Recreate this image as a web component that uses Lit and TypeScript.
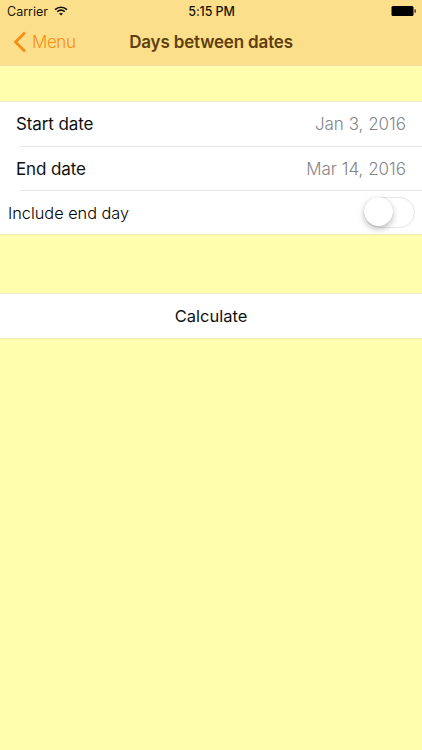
import { LitElement, html, css } from "lit";
import { customElement } from "lit/decorators.js";

@customElement("app-root")
export class AppRoot extends LitElement {
  static styles = css`
    :host { display: block; width: 422px; height: 750px; background: #ffffad; overflow: hidden;
      font-family: Inter, "Liberation Sans", sans-serif; color: #111; }
    * { box-sizing: border-box; }
    .top { height: 66px; background: #fcdf8a; border-bottom: 1px solid #eed9a0; display: flex; flex-direction: column; }
    .status { height: 21px; display: grid; grid-template-columns: 1fr auto 1fr; align-items: center; padding: 1px 6px 0 7px; font-size: 12.5px; color: #1a1408; }
    .status .l { display: flex; align-items: center; gap: 6px; }
    .status .t { font-weight: 500; letter-spacing: -0.1px; }
    .status .r { display: flex; justify-content: flex-end; }
    .nav { flex: 1; display: grid; grid-template-columns: 1fr auto 1fr; align-items: center; padding-bottom: 2px; }
    .back { display: flex; align-items: center; gap: 5px; padding-left: 13px; color: #f68f14; font-size: 17px; letter-spacing: -0.4px; font-weight: 300; }
    .title { font-size: 17px; font-weight: 600; color: #5f3f10; letter-spacing: -0.17px; }
    .spacer1 { height: 35px; }
    .group { background: #fff; border-top: 1px solid #f0efd0; border-bottom: 1px solid #f0efc4; }
    .row { height: 44px; display: flex; align-items: center; justify-content: space-between; padding: 0 16px; font-size: 17px; letter-spacing: -0.1px; position: relative; }
    .row + .row::before { content: ""; position: absolute; left: 20px; right: 0; top: -0.5px; height: 1px; background: #e8e8e8; }
    .row + .row > span { padding-top: 2px; }
    .val { color: #858589; letter-spacing: 0; font-weight: 300; }
    .tight { padding: 0 7px 0 8px; font-size: 16.3px; letter-spacing: 0; font-weight: 300; color: #000; }
    .switch { width: 51px; height: 31px; border-radius: 16px; border: 1.5px solid #e5e5e5; background: #fff; position: relative; }
    .knob { position: absolute; left: -1px; top: -0.5px; width: 29px; height: 29px; border-radius: 50%; background: #fff;
      box-shadow: 0 3px 6px rgba(0,0,0,.25), 0 0 1px rgba(0,0,0,.2); }
    .spacer2 { height: 58px; }
    .calc { height: 44px; display: flex; align-items: center; justify-content: center; font-size: 16.5px; }
  `;
  render() {
    return html`
      <div class="top">
        <div class="status">
          <div class="l"><span>Carrier</span>
            <svg width="14" height="10" viewBox="0 0 14 10" fill="none" stroke="#111" stroke-width="1.6">
              <path d="M1 3.6C4.4.5 9.6.5 13 3.6"/><path d="M3.2 5.7C5.4 3.8 8.6 3.8 10.8 5.7"/>
              <path d="M7 9.6 5 7.6C6.2 6.7 7.8 6.7 9 7.6Z" fill="#111" stroke="none"/>
            </svg></div>
          <div class="t">5:15 PM</div>
          <div class="r"><svg width="25" height="10" viewBox="0 0 25 10"><rect x="0.5" y="0" width="22" height="10" rx="1.5" fill="#000"/><rect x="23.4" y="3.2" width="1.4" height="3.6" rx=".6" fill="#333"/></svg></div>
        </div>
        <div class="nav">
          <div class="back"><svg width="14" height="22" viewBox="0 0 14 22" fill="none" stroke="#f68f14" stroke-width="2.8"><path d="M12 1.5 2.5 11l9.5 9.5"/></svg><span>Menu</span></div>
          <div class="title">Days between dates</div>
          <div></div>
        </div>
      </div>
      <div class="spacer1"></div>
      <div class="group">
        <div class="row"><span>Start date</span><span class="val">Jan 3, 2016</span></div>
        <div class="row"><span>End date</span><span class="val">Mar 14, 2016</span></div>
        <div class="row tight"><span>Include end day</span><div class="switch"><div class="knob"></div></div></div>
      </div>
      <div class="spacer2"></div>
      <div class="group"><div class="calc">Calculate</div></div>
    `;
  }
}
